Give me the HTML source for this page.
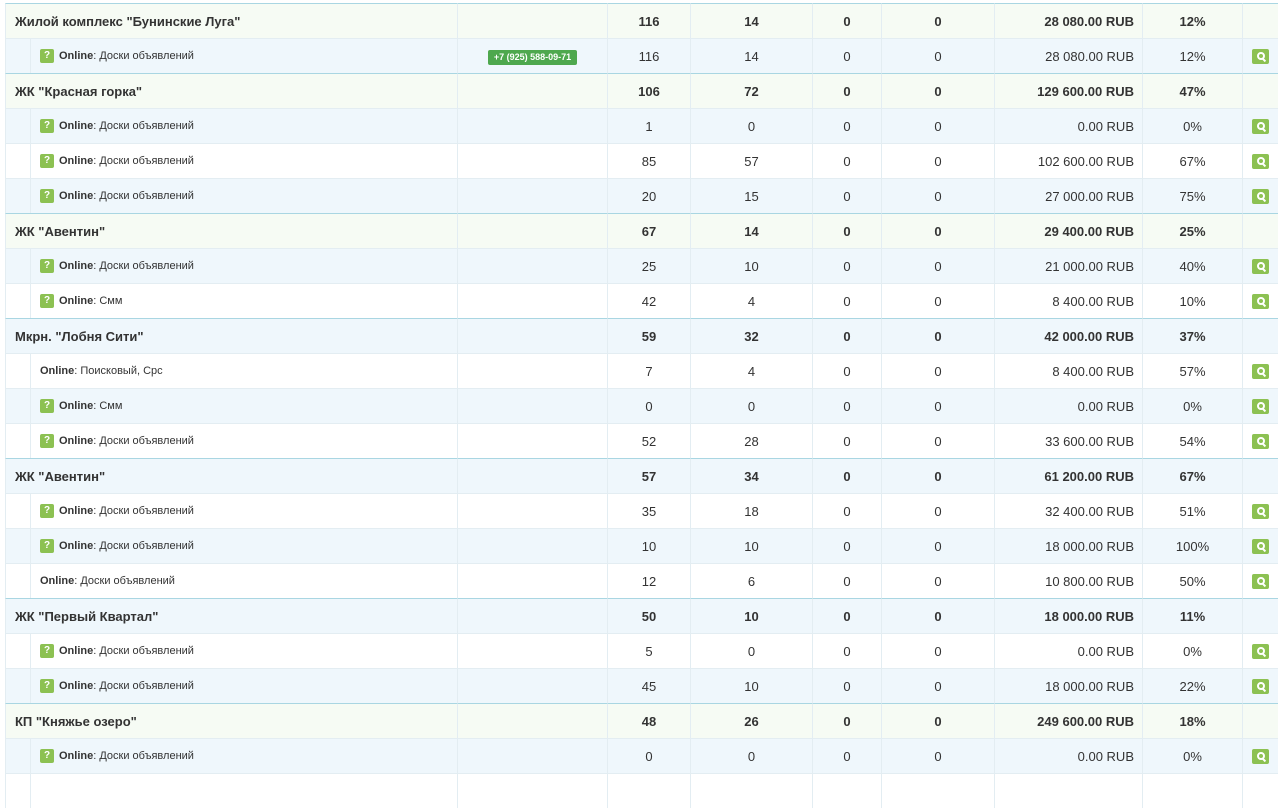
<!DOCTYPE html>
<html><head><meta charset="utf-8"><style>
body{margin:0;background:#fff;font-family:"Liberation Sans",Arial,sans-serif;color:#333;}
table{position:absolute;left:5px;top:3px;border-collapse:separate;border-spacing:0;table-layout:fixed;width:1273px;}
td{height:34px;padding:0;border-left:1px solid #e3edf2;border-top:1px solid #e3edf2;font-size:13px;text-align:center;white-space:nowrap;overflow:hidden;}
tr.g td{border-top:1px solid #a9d6e2;font-weight:bold;}
tr.o td{background:#eff7fc;}
tr.g.e td{background:#f6fbf4;}
td.n{text-align:left;padding-left:9px;font-size:11px;}
td.n div{display:flex;align-items:center;height:34px;}
tr.g td.n{font-size:13px;}
td.r{text-align:right;padding-right:8px;}
.q{display:inline-block;width:14px;height:14px;background:#8cc152;border-radius:2px;color:#fff;font-size:10px;font-weight:bold;text-align:center;line-height:14px;margin-right:5px;}
.s{display:inline-block;width:17px;height:15px;background:#8cc152;border-radius:2px;vertical-align:middle;position:relative;}
.s:before{content:"";position:absolute;left:5px;top:3px;width:4px;height:4px;border:2px solid #fff;border-radius:50%;}
.s:after{content:"";position:absolute;left:11px;top:9px;width:2px;height:4px;background:#fff;transform:rotate(-45deg);}
.ph{display:inline-block;background:#4ea84e;color:#fff;font-size:9px;font-weight:bold;padding:0 6px;height:15px;line-height:15px;border-radius:2px;}
b{font-weight:bold;}
</style></head><body>
<table>
<colgroup><col style="width:25px"><col style="width:427px"><col style="width:150px"><col style="width:83px"><col style="width:122px"><col style="width:69px"><col style="width:113px"><col style="width:148px"><col style="width:100px"><col style="width:36px"></colgroup>
<tr class="g e"><td class="n" colspan="2">Жилой комплекс "Бунинские Луга"</td><td></td><td>116</td><td>14</td><td>0</td><td>0</td><td class="r">28 080.00 RUB</td><td>12%</td><td></td></tr>
<tr class="o"><td></td><td class="n"><div><span class="q">?</span><b>Online</b>: Доски объявлений</div></td><td><span class="ph">+7 (925) 588-09-71</span></td><td>116</td><td>14</td><td>0</td><td>0</td><td class="r">28 080.00 RUB</td><td>12%</td><td><span class="s"></span></td></tr>
<tr class="g e"><td class="n" colspan="2">ЖК "Красная горка"</td><td></td><td>106</td><td>72</td><td>0</td><td>0</td><td class="r">129 600.00 RUB</td><td>47%</td><td></td></tr>
<tr class="o"><td></td><td class="n"><div><span class="q">?</span><b>Online</b>: Доски объявлений</div></td><td></td><td>1</td><td>0</td><td>0</td><td>0</td><td class="r">0.00 RUB</td><td>0%</td><td><span class="s"></span></td></tr>
<tr><td></td><td class="n"><div><span class="q">?</span><b>Online</b>: Доски объявлений</div></td><td></td><td>85</td><td>57</td><td>0</td><td>0</td><td class="r">102 600.00 RUB</td><td>67%</td><td><span class="s"></span></td></tr>
<tr class="o"><td></td><td class="n"><div><span class="q">?</span><b>Online</b>: Доски объявлений</div></td><td></td><td>20</td><td>15</td><td>0</td><td>0</td><td class="r">27 000.00 RUB</td><td>75%</td><td><span class="s"></span></td></tr>
<tr class="g e"><td class="n" colspan="2">ЖК "Авентин"</td><td></td><td>67</td><td>14</td><td>0</td><td>0</td><td class="r">29 400.00 RUB</td><td>25%</td><td></td></tr>
<tr class="o"><td></td><td class="n"><div><span class="q">?</span><b>Online</b>: Доски объявлений</div></td><td></td><td>25</td><td>10</td><td>0</td><td>0</td><td class="r">21 000.00 RUB</td><td>40%</td><td><span class="s"></span></td></tr>
<tr><td></td><td class="n"><div><span class="q">?</span><b>Online</b>: Смм</div></td><td></td><td>42</td><td>4</td><td>0</td><td>0</td><td class="r">8 400.00 RUB</td><td>10%</td><td><span class="s"></span></td></tr>
<tr class="g o"><td class="n" colspan="2">Мкрн. "Лобня Сити"</td><td></td><td>59</td><td>32</td><td>0</td><td>0</td><td class="r">42 000.00 RUB</td><td>37%</td><td></td></tr>
<tr><td></td><td class="n"><div><b>Online</b>: Поисковый, Срс</div></td><td></td><td>7</td><td>4</td><td>0</td><td>0</td><td class="r">8 400.00 RUB</td><td>57%</td><td><span class="s"></span></td></tr>
<tr class="o"><td></td><td class="n"><div><span class="q">?</span><b>Online</b>: Смм</div></td><td></td><td>0</td><td>0</td><td>0</td><td>0</td><td class="r">0.00 RUB</td><td>0%</td><td><span class="s"></span></td></tr>
<tr><td></td><td class="n"><div><span class="q">?</span><b>Online</b>: Доски объявлений</div></td><td></td><td>52</td><td>28</td><td>0</td><td>0</td><td class="r">33 600.00 RUB</td><td>54%</td><td><span class="s"></span></td></tr>
<tr class="g o"><td class="n" colspan="2">ЖК "Авентин"</td><td></td><td>57</td><td>34</td><td>0</td><td>0</td><td class="r">61 200.00 RUB</td><td>67%</td><td></td></tr>
<tr><td></td><td class="n"><div><span class="q">?</span><b>Online</b>: Доски объявлений</div></td><td></td><td>35</td><td>18</td><td>0</td><td>0</td><td class="r">32 400.00 RUB</td><td>51%</td><td><span class="s"></span></td></tr>
<tr class="o"><td></td><td class="n"><div><span class="q">?</span><b>Online</b>: Доски объявлений</div></td><td></td><td>10</td><td>10</td><td>0</td><td>0</td><td class="r">18 000.00 RUB</td><td>100%</td><td><span class="s"></span></td></tr>
<tr><td></td><td class="n"><div><b>Online</b>: Доски объявлений</div></td><td></td><td>12</td><td>6</td><td>0</td><td>0</td><td class="r">10 800.00 RUB</td><td>50%</td><td><span class="s"></span></td></tr>
<tr class="g o"><td class="n" colspan="2">ЖК "Первый Квартал"</td><td></td><td>50</td><td>10</td><td>0</td><td>0</td><td class="r">18 000.00 RUB</td><td>11%</td><td></td></tr>
<tr><td></td><td class="n"><div><span class="q">?</span><b>Online</b>: Доски объявлений</div></td><td></td><td>5</td><td>0</td><td>0</td><td>0</td><td class="r">0.00 RUB</td><td>0%</td><td><span class="s"></span></td></tr>
<tr class="o"><td></td><td class="n"><div><span class="q">?</span><b>Online</b>: Доски объявлений</div></td><td></td><td>45</td><td>10</td><td>0</td><td>0</td><td class="r">18 000.00 RUB</td><td>22%</td><td><span class="s"></span></td></tr>
<tr class="g e"><td class="n" colspan="2">КП "Княжье озеро"</td><td></td><td>48</td><td>26</td><td>0</td><td>0</td><td class="r">249 600.00 RUB</td><td>18%</td><td></td></tr>
<tr class="o"><td></td><td class="n"><div><span class="q">?</span><b>Online</b>: Доски объявлений</div></td><td></td><td>0</td><td>0</td><td>0</td><td>0</td><td class="r">0.00 RUB</td><td>0%</td><td><span class="s"></span></td></tr>
<tr><td></td><td class="n"></td><td></td><td></td><td></td><td></td><td></td><td class="r"></td><td></td><td></td></tr>
</table>
</body></html>
